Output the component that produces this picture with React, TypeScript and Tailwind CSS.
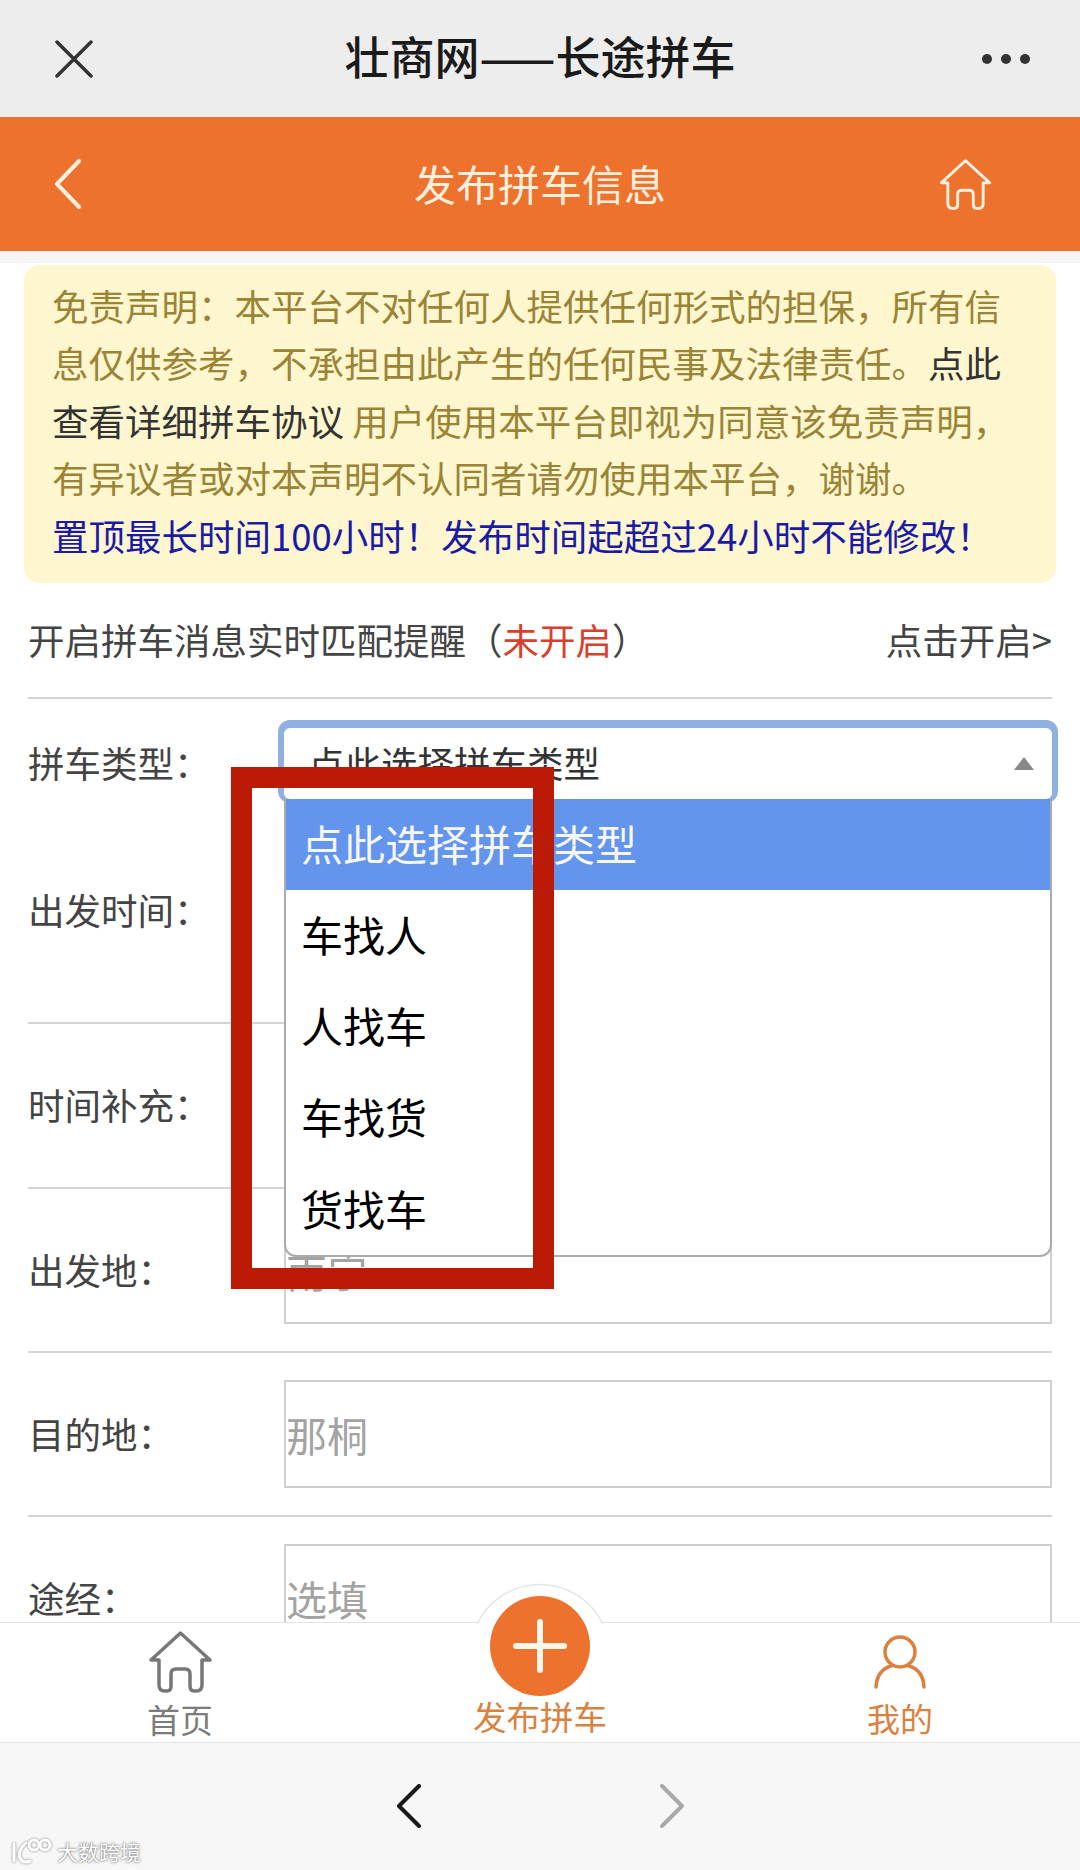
const FieldRow = ({ label, placeholder }: { label: string; placeholder: string }) => {
  return (
    <div className="flex items-center mx-7 pt-[27px] pb-[27px] border-b-2 border-[#d4d4d4]">
      <span className="w-[256px] shrink-0 text-[#444]">{label}</span>
      <input
        readOnly
        placeholder={placeholder}
        className="flex-1 min-w-0 h-[108px] border-2 border-[#cfcfcf] pl-0 text-[41px] outline-none placeholder:text-[#a3a3a3]"
      />
    </div>
  )
}

const Notice = () => {
  return (
    <section className="mx-6 mt-0.5 h-[318px] rounded-2xl bg-[#fdf6cf] pl-7 pr-[40px] pt-[12px] leading-[57.4px] text-[#9a8436]">
      <p>
        免责声明：本平台不对任何人提供任何形式的担保，所有信息仅供参考，不承担由此产生的任何民事及法律责任。
        <span className="text-[#333]">点此查看详细拼车协议</span> 用户使用本平台即视为同意该免责声明，有异议者或对本声明不认同者请勿使用本平台，谢谢。
      </p>
      <p className="text-[#1a1aa6] whitespace-nowrap">置顶最长时间100小时！发布时间起超过24小时不能修改！</p>
    </section>
  )
}

const HomeIcon = ({ className }: { className: string }) => {
  return (
    <svg viewBox="0 0 63 62" fill="none" stroke="currentColor" strokeWidth="3.5" strokeLinejoin="round" strokeLinecap="round" className={className}>
      <path d="M2 29 L31.5 2 L61 29 H53 V54 Q53 60 47 60 H45 Q41 60 41 55 V43 Q41 38 36 38 H27 Q22 38 22 43 V55 Q22 60 18 60 H16 Q10 60 10 54 V29 Z" />
    </svg>
  )
}

const TabBar = () => {
  return (
    <nav className="relative z-20 grid grid-cols-3 h-[120px] shrink-0 bg-white border-t border-[#e2e2e2] text-[33px] leading-[40px]">
      <svg viewBox="0 0 130 41" fill="white" stroke="#e4e4e4" strokeWidth="1.5" className="absolute left-[475px] -top-[40px] w-[130px] h-[41px]">
        <path d="M2 41 A 70 70 0 0 1 128 41" />
      </svg>
      <div className="absolute left-[490px] -top-[27px] flex items-center justify-center w-[100px] h-[100px] rounded-full bg-[#ec722e]">
        <svg viewBox="0 0 54 54" fill="none" stroke="#fff6ea" strokeWidth="6" strokeLinecap="round" className="w-[54px] h-[54px]">
          <path d="M27 3 V51 M3 27 H51" />
        </svg>
      </div>
      <div className="flex flex-col items-center pt-2 text-[#7c7c7c]">
        <HomeIcon className="w-[63px] h-[62px] text-[#777]" />
        <span className="mt-[6px]">首页</span>
      </div>
      <div className="flex flex-col items-center justify-end pb-[6px] text-[#d9813f]">
        <span className="text-[33.5px]">发布拼车</span>
      </div>
      <div className="flex flex-col items-center pt-3 text-[#d9813f]">
        <svg viewBox="0 0 52 54" fill="none" stroke="#dd7f3e" strokeWidth="3.5" strokeLinecap="round" className="w-[52px] h-[54px]">
          <circle cx="26" cy="17" r="15" />
          <path d="M2 52 Q3 35 17 31 M50 52 Q49 35 35 31" />
        </svg>
        <span className="mt-[9px]">我的</span>
      </div>
    </nav>
  )
}

const App = () => {
  return (
    <div
      className="relative flex flex-col h-[1870px] w-[1080px] overflow-hidden bg-white text-[36.5px]"
      style={{ fontFamily: '"Noto Sans CJK SC", "Noto Sans", sans-serif' }}
    >
      <header className="grid grid-cols-[1fr_auto_1fr] items-center h-[117px] shrink-0 bg-[#ededed] px-[50px]">
        <svg viewBox="0 0 38 38" fill="none" stroke="#333" strokeWidth="3.5" strokeLinecap="round" className="ml-[5px] w-[38px] h-[38px]">
          <path d="M2 2 L36 36 M36 2 L2 36" />
        </svg>
        <h1 className="text-[45px] leading-[60px] font-medium text-[#1a1a1a] pb-[5px]">壮商网——长途拼车</h1>
        <div className="flex gap-[9px] justify-self-end">
          <span className="w-[10px] h-[10px] rounded-full bg-[#333]" />
          <span className="w-[10px] h-[10px] rounded-full bg-[#333]" />
          <span className="w-[10px] h-[10px] rounded-full bg-[#333]" />
        </div>
      </header>

      <div className="grid grid-cols-[1fr_auto_1fr] items-center h-[134px] shrink-0 bg-[#ec722e] px-[54px] text-[#fdeedd]">
        <svg viewBox="0 0 27 50" fill="none" stroke="currentColor" strokeWidth="4" strokeLinecap="round" strokeLinejoin="round" className="w-[27px] h-[50px]">
          <path d="M25 2 L3 25 L25 48" />
        </svg>
        <h2 className="text-[42px] leading-[56px] pb-[2px]">发布拼车信息</h2>
        <HomeIcon className="w-[55px] h-[51px] justify-self-end mr-[33px]" />
      </div>

      <main className="flex-1 min-h-0 overflow-hidden">
        <div className="h-3 bg-[#f5f5f5]" />
        <Notice />

        <div className="flex items-center justify-between mx-7 h-[116px] border-b-2 border-[#d4d4d4] text-[#444]">
          <span>
            开启拼车消息实时匹配提醒（<span className="text-[#d9402c]">未开启</span>）
          </span>
          <span>点击开启&gt;</span>
        </div>

        <div className="flex items-center mx-7 pt-[29px]">
          <span className="w-[256px] shrink-0 text-[#444]">拼车类型：</span>
          <div className="relative flex-1 flex items-center justify-between h-[71px] rounded-md bg-white shadow-[0_-2px_0_6px_#8fb0e0] pl-[24px] pr-[18px] text-[#333]">
            <span>点此选择拼车类型</span>
            <span className="w-0 h-0 border-x-[10px] border-x-transparent border-b-[13px] border-b-[#888]" />
            <ul className="absolute z-10 top-full left-0 right-0 bg-white border-x-2 border-b-2 border-[#ababab] rounded-b-xl text-[42px] text-black overflow-hidden">
              <li className="flex items-center h-[91px] pl-[15px] pb-1 bg-[#6495ed] text-[#f7f7f7]">点此选择拼车类型</li>
              <li className="flex items-center h-[91px] pl-[15px] pb-1">车找人</li>
              <li className="flex items-center h-[91px] pl-[15px] pb-1">人找车</li>
              <li className="flex items-center h-[91px] pl-[15px] pb-1">车找货</li>
              <li className="flex items-center h-[92px] pl-[15px] pb-1">货找车</li>
            </ul>
          </div>
        </div>

        <div className="flex items-center mx-7 h-[225px] border-b-2 border-[#d4d4d4] text-[#444]">出发时间：</div>
        <div className="flex items-center mx-7 h-[165px] border-b-2 border-[#d4d4d4] text-[#444]">时间补充：</div>

        <FieldRow label="出发地：" placeholder="南宁" />
        <FieldRow label="目的地：" placeholder="那桐" />
        <FieldRow label="途经：" placeholder="选填" />
      </main>

      <TabBar />

      <footer className="flex items-center justify-center gap-[239px] h-[128px] shrink-0 bg-[#f7f7f7] border-t border-[#e4e4e4] pb-[2px]">
        <svg viewBox="0 0 25 44" fill="none" stroke="#1a1a1a" strokeWidth="4" strokeLinecap="round" strokeLinejoin="round" className="w-[25px] h-[44px]">
          <path d="M23 2 L3 22 L23 42" />
        </svg>
        <svg viewBox="0 0 25 44" fill="none" stroke="#a9a9a9" strokeWidth="4" strokeLinecap="round" strokeLinejoin="round" className="w-[25px] h-[44px]">
          <path d="M2 2 L22 22 L2 42" />
        </svg>
      </footer>

      {/* red annotation box drawn over the screenshot */}
      <div className="absolute z-30 left-[231px] top-[767px] w-[323px] h-[522px] border-[21px] border-[#bb1a06]" />

      {/* watermark */}
      <div className="absolute z-30 left-[10px] top-[1837px] flex items-center gap-[5px] text-[21px] leading-[28px] text-white [text-shadow:0_0_3px_#777,0_0_1px_#777]">
        <svg viewBox="0 0 42 26" fill="none" stroke="white" strokeWidth="3" strokeLinecap="round" className="w-[42px] h-[26px] drop-shadow-[0_0_1px_#777]">
          <path d="M4 6 V23 M16 5 Q7 13 10 20 Q13 26 20 23" />
          <circle cx="24" cy="7" r="5" />
          <circle cx="35" cy="7" r="5" />
        </svg>
        <span>大数跨境</span>
      </div>
    </div>
  )
}

export default App
